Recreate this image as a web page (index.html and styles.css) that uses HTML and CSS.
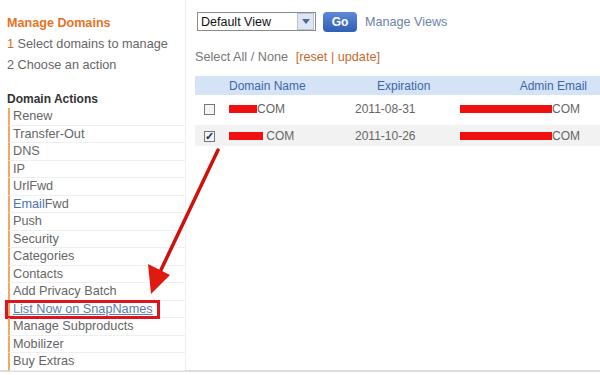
FILE: index.html
```html
<!DOCTYPE html>
<html lang="en">
<head>
    <meta charset="UTF-8">
    <title>Manage Domains</title>
    <link rel="stylesheet" href="styles.css">
</head>
<body>
    <div class="page">
        <div class="sidebar">
            <h2 class="title">Manage Domains</h2>
            <p class="step"><span class="num">1</span> Select domains to manage</p>
            <p class="step">2 Choose an action</p>

            <h3 class="actions-title">Domain Actions</h3>
            <ul class="actions">
                <li>Renew</li>
                <li>Transfer-Out</li>
                <li>DNS</li>
                <li>IP</li>
                <li>UrlFwd</li>
                <li><span class="blue">Email</span>Fwd</li>
                <li>Push</li>
                <li>Security</li>
                <li>Categories</li>
                <li>Contacts</li>
                <li>Add Privacy Batch</li>
                <li class="marked"><span class="link">List Now on SnapNames</span></li>
                <li>Manage Subproducts</li>
                <li>Mobilizer</li>
                <li>Buy Extras</li>
            </ul>
        </div>

        <div class="main">
            <div class="toolbar">
                <div class="select">
                    <span>Default View</span>
                    <span class="select-btn">
                        <svg width="8" height="5" viewBox="0 0 8 5"><path d="M0 0 L8 0 L4 5 Z" fill="#4a6a9a"/></svg>
                    </span>
                </div>
                <button class="go">Go</button>
                <span class="views">Manage Views</span>
            </div>

            <div class="selectline">
                Select All / None <span class="brackets">[reset | update]</span>
            </div>

            <table class="domains">
                <thead>
                    <tr>
                        <th class="c-check"></th>
                        <th class="c-name">Domain Name</th>
                        <th class="c-exp">Expiration</th>
                        <th class="c-mail">Admin Email</th>
                    </tr>
                </thead>
                <tbody>
                    <tr>
                        <td class="c-check"><span class="box"></span></td>
                        <td class="c-name"><span class="redact" style="width:28px"></span>COM</td>
                        <td class="c-exp">2011-08-31</td>
                        <td class="c-mail"><span class="redact" style="width:92px"></span>COM</td>
                    </tr>
                    <tr class="alt">
                        <td class="c-check"><span class="box checked">&#10003;</span></td>
                        <td class="c-name"><span class="redact" style="width:34px"></span> COM</td>
                        <td class="c-exp">2011-10-26</td>
                        <td class="c-mail"><span class="redact" style="width:92px"></span>COM</td>
                    </tr>
                </tbody>
            </table>
        </div>
    </div>

    <svg class="arrow" width="600" height="375" viewBox="0 0 600 375">
        <line x1="218" y1="150" x2="160" y2="272" stroke="#d0100a" stroke-width="3.5" stroke-linecap="round"/>
        <path d="M151 294 L148 264 L170 275 Z" fill="#e01a10"/>
    </svg>
</body>
</html>
```

FILE: styles.css
```css
body {
    margin: 0;
    font-family: "Liberation Sans", Arial, sans-serif;
    font-size: 12px;
    color: #666;
    background: #fff;
    width: 600px;
    height: 375px;
    overflow: hidden;
    position: relative;
}
.page {
    display: flex;
    height: 370px;
    border-bottom: 2px solid #ddd;
}
.sidebar {
    width: 178px;
    flex-shrink: 0;
    padding-left: 7px;
    border-right: 1px solid #f0f0f0;
}
.title {
    margin: 16px 0 4px 0;
    font-size: 12.6px;
    font-weight: bold;
    color: #e8731f;
}
.step {
    margin: 0;
    line-height: 21px;
    font-size: 12.7px;
    color: #666;
}
.step .num {
    color: #d0701e;
}
.actions-title {
    margin: 16px 0 2px 0;
    font-size: 12px;
    font-weight: bold;
    color: #333;
}
.actions {
    list-style: none;
    margin: 0;
    padding: 0;
}
.actions li {
    height: 16.5px;
    line-height: 17px;
    padding-left: 3px;
    margin-left: 1px;
    border-left: 2px solid #f0a868;
    border-bottom: 1px solid #efefef;
    color: #666;
    font-size: 12.7px;
    position: relative;
}
.actions .blue {
    color: #4a72b0;
}
.actions .link {
    color: #5a7aa8;
    text-decoration: underline;
}
.actions li.marked::after {
    content: "";
    position: absolute;
    left: -5px;
    top: -1px;
    width: 149px;
    height: 13px;
    border: 3px solid #e0141c;
}
.main {
    flex: 1;
    padding-left: 9px;
}
.toolbar {
    display: flex;
    align-items: center;
    gap: 7px;
    margin-top: 12px;
    height: 19px;
}
.select {
    display: flex;
    align-items: center;
    justify-content: space-between;
    width: 114px;
    height: 17px;
    border: 1px solid #8a8a8a;
    padding-left: 3px;
    margin-left: 2px;
    color: #111;
    font-size: 12.5px;
}
.select-btn {
    display: flex;
    align-items: center;
    justify-content: center;
    width: 15px;
    height: 15px;
    margin-right: 1px;
    background: #dfe6f2;
    border: 1px solid #b8c6dc;
}
.go {
    width: 34px;
    height: 20px;
    border: none;
    border-radius: 4px;
    background: linear-gradient(#5d8ad6, #2f5fb6);
    color: #fff;
    font-family: "Liberation Sans", Arial, sans-serif;
    font-size: 12px;
    font-weight: bold;
    padding: 0;
}
.views {
    color: #6a84a6;
    font-size: 12.6px;
    margin-left: 1px;
}
.selectline {
    margin-top: 19px;
    color: #777;
    font-size: 12.7px;
}
.brackets {
    color: #c46a30;
    margin-left: 4px;
}
.domains {
    margin-top: 12px;
    border-collapse: separate;
    border-spacing: 0;
    width: 405px;
    table-layout: fixed;
    font-size: 12px;
}
.domains th {
    background: #d5e3f6;
    color: #3d66a8;
    font-weight: normal;
    height: 19px;
    padding: 0;
    white-space: nowrap;
}
.domains td {
    height: 21px;
    padding: 0;
    color: #666;
    white-space: nowrap;
    border-top: 3px solid #fff;
    border-bottom: 3px solid #fff;
}
.domains tr.alt td {
    background: #f2f2f2;
}
.c-check {
    width: 34px;
    text-align: left;
}
.domains td.c-check {
    padding-left: 9px;
}
.c-name {
    width: 126px;
    text-align: left;
}
.c-exp {
    width: 100px;
    text-align: left;
}
.domains th.c-exp {
    width: 78px;
    padding-left: 22px;
}
.domains th.c-mail {
    text-align: right;
    padding-right: 13px;
}
.domains td.c-mail {
    text-align: right;
    padding-right: 20px;
}
.box {
    display: inline-block;
    width: 9px;
    height: 9px;
    border: 1px solid #777;
    background: #f4f4f4;
    vertical-align: middle;
    font-size: 11px;
    line-height: 9px;
    color: #1a2a6a;
    font-weight: bold;
    text-align: center;
}
.redact {
    display: inline-block;
    height: 8px;
    background: #f01010;
    vertical-align: middle;
}
.arrow {
    position: absolute;
    left: 0;
    top: 0;
    pointer-events: none;
}
```
